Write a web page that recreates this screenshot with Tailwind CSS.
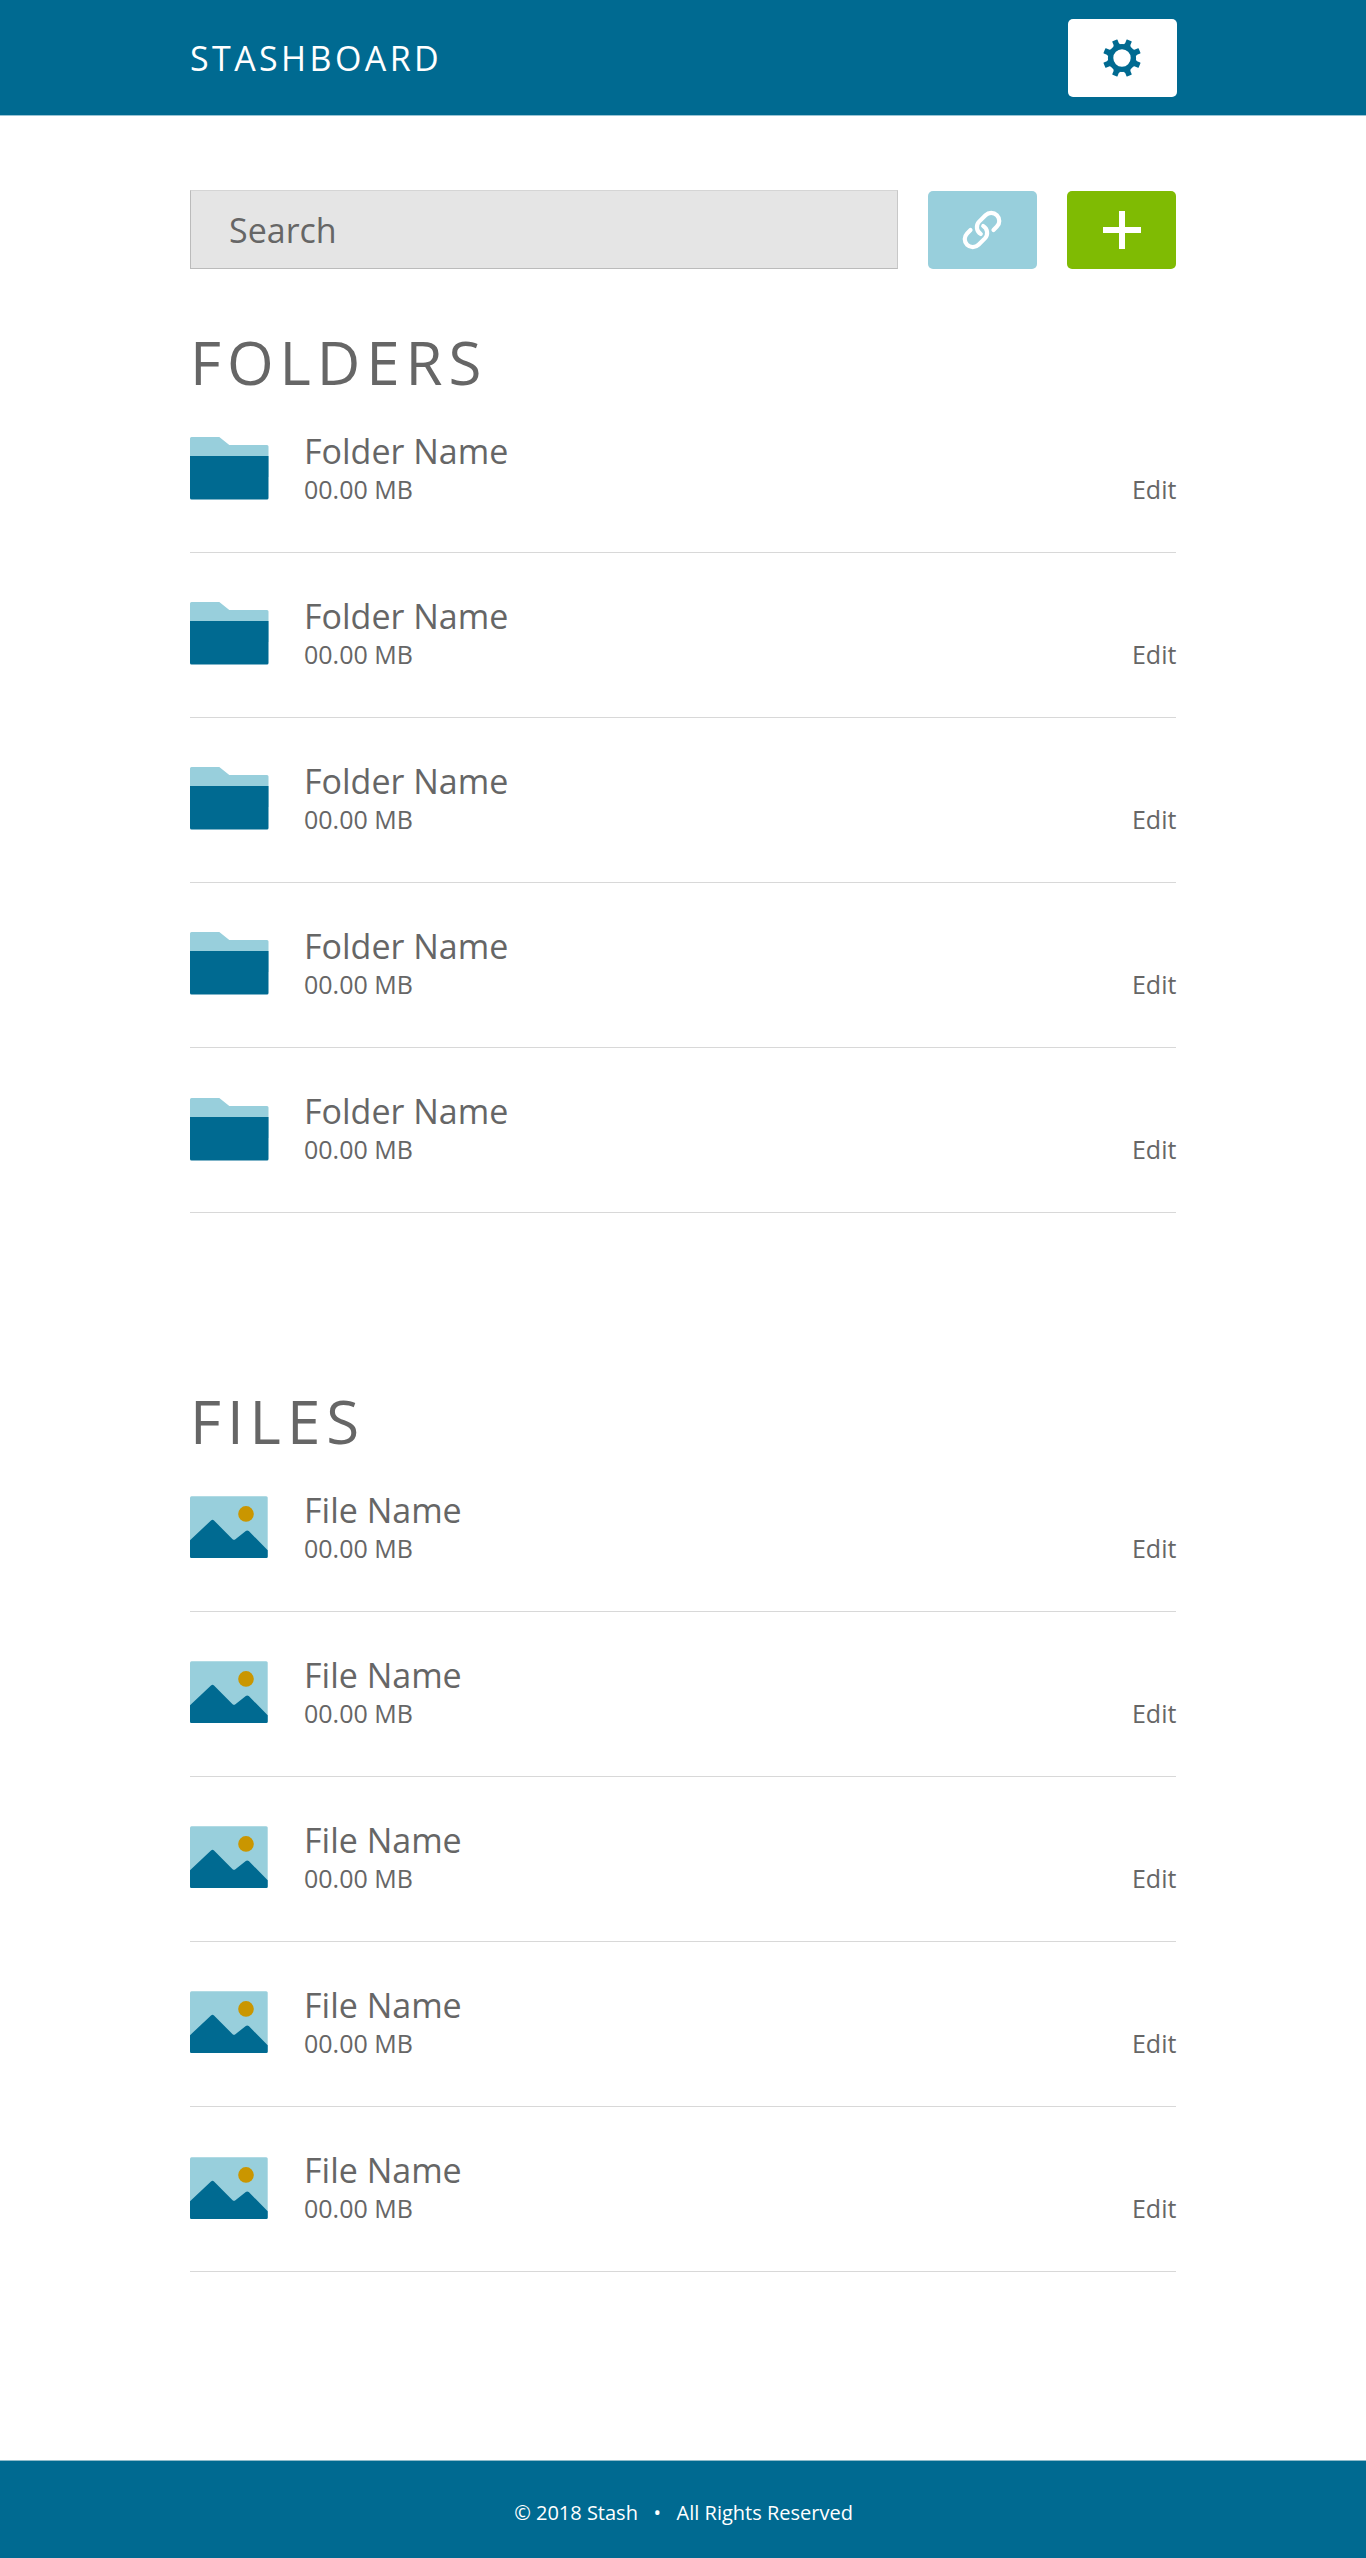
<!DOCTYPE html>
<html lang="en">
<head>
<meta charset="utf-8">
<title>Stashboard</title>
<script src="https://cdn.jsdelivr.net/npm/@tailwindcss/browser@4"></script>
</head>
<body class="bg-white font-['Open_Sans',sans-serif] text-[#666]">
<svg class="hidden">
  <symbol id="folder" viewBox="0 0 79 63">
    <path fill="#98cfdc" d="M1.5 0H29.3L39.3 8H77a1.5 1.5 0 0 1 1.5 1.5V40H0V1.5A1.5 1.5 0 0 1 1.5 0Z"/>
    <path fill="#006a91" d="M0 19H78.5V61a1.5 1.5 0 0 1-1.5 1.5H1.5A1.5 1.5 0 0 1 0 61Z"/>
  </symbol>
  <symbol id="image" viewBox="0 0 79 63">
    <rect y=".2" width="77.7" height="61.8" rx="1.5" fill="#98cfdc"/>
    <circle cx="56" cy="17.9" r="7.8" fill="#ca9600"/>
    <path fill="#006a91" d="M0 44.2L21 24.5Q22.5 23.1 24 24.5L42.6 43.2Q44 44.4 45.4 43.2L55.8 34.9Q57.3 33.8 58.8 35.1L77.7 54.2V60.5a1.5 1.5 0 0 1-1.5 1.5H1.5A1.5 1.5 0 0 1 0 60.5Z"/>
  </symbol>
</svg>

<header class="h-[116px] border-b border-[#99c4d5] bg-[#006a91]">
  <div class="ml-[190px] flex h-full w-[986.5px] items-center justify-between">
    <h1 class="text-[34px] leading-10 tracking-[3.4px] text-white">STASHBOARD</h1>
    <button class="flex h-[78px] w-[108.5px] items-center justify-center rounded-[5px] bg-white" aria-label="Settings">
      <svg class="size-10" viewBox="-20 -20 40 40" fill="#006a91">
        <circle r="11.4" fill="none" stroke="#006a91" stroke-width="5.4"/>
        <g id="teeth"></g>
      </svg>
    </button>
  </div>
</header>

<main class="ml-[190px] w-[986.4px] pt-[74px]">
  <div class="flex items-start justify-between">
    <div class="flex h-[79px] w-[708px] items-center border border-t-[#d5d5d5] border-r-[#c8c8c8] border-b-[#bbb] border-l-[#bbb] bg-[#e5e5e5] pl-[38px] text-[34px] leading-10">Search</div>
    <button class="mt-[0.5px] ml-auto flex h-[78.5px] w-[109px] items-center justify-center rounded-[5px] bg-[#98cfdc]" aria-label="Copy link">
      <svg class="size-10" viewBox="-20 -20 40 40" fill="none" stroke="#fff" stroke-width="4.2" stroke-linecap="round">
        <path d="M11.5 0L14.9 -3.4A8 8 0 0 0 3.5 -14.8L-2.9 -8.4A8 8 0 0 0 -1.2 4"/>
        <path d="M-11.5 0L-14.9 3.4A8 8 0 0 0 -3.5 14.8L2.9 8.4A8 8 0 0 0 1.2 -4"/>
      </svg>
    </button>
    <button class="mt-[0.5px] ml-[30.5px] flex h-[78.5px] w-[109px] items-center justify-center rounded-[5px] bg-[#7fbb03]" aria-label="Add">
      <svg class="size-10" viewBox="-20 -20 40 40" stroke="#fff" stroke-width="6"><path d="M-19 0H19M0 -19V19"/></svg>
    </button>
  </div>

  <section class="pt-[63px]">
    <h2 class="h-14 text-[60px] leading-[60px] tracking-[5.95px]">FOLDERS</h2>
    <ul id="folders"></ul>
  </section>
  <section class="pt-[178px]">
    <h2 class="h-14 text-[60px] leading-[60px] tracking-[5.95px]">FILES</h2>
    <ul id="files"></ul>
  </section>
</main>

<footer class="mt-[188px] h-[98px] border-t border-[#8fbccb] bg-[#006a91] pt-[37px] pl-px text-center text-[20px] leading-[30px] text-white">© 2018 Stash&nbsp;&nbsp; •&nbsp;&nbsp; All Rights Reserved</footer>

<script>
  const row = (icon, name) => `
    <li class="group flex h-[165px] items-start border-b border-[#d8d8d8] pt-[44px]">
      <svg class="mt-[5px] h-[63px] w-[79px] shrink-0 group-last:mt-[6px]"><use href="#${icon}"/></svg>
      <div class="ml-[35px] grow">
        <p class="text-[34px] leading-[38px]">${name}</p>
        <p class="text-[25px] leading-[38px]">00.00 MB</p>
      </div>
      <a class="mt-[38px] text-[25px] leading-[38px]">Edit</a>
    </li>`;
  document.getElementById('folders').innerHTML = row('folder', 'Folder Name').repeat(5);
  document.getElementById('files').innerHTML = row('image', 'File Name').repeat(5);
  document.getElementById('teeth').innerHTML = [0, 1, 2, 3, 4, 5, 6, 7].map(i =>
    `<path transform="rotate(${22.5 + 45 * i})" d="M-4.4 -13Q-3.1 -13.8 -2.8 -15.2L-2.8 -18.5Q-2.8 -19 -2.3 -19H2.3Q2.8 -19 2.8 -18.5L2.8 -15.2Q3.1 -13.8 4.4 -13Z"/>`).join('');
</script>
</body>
</html>
